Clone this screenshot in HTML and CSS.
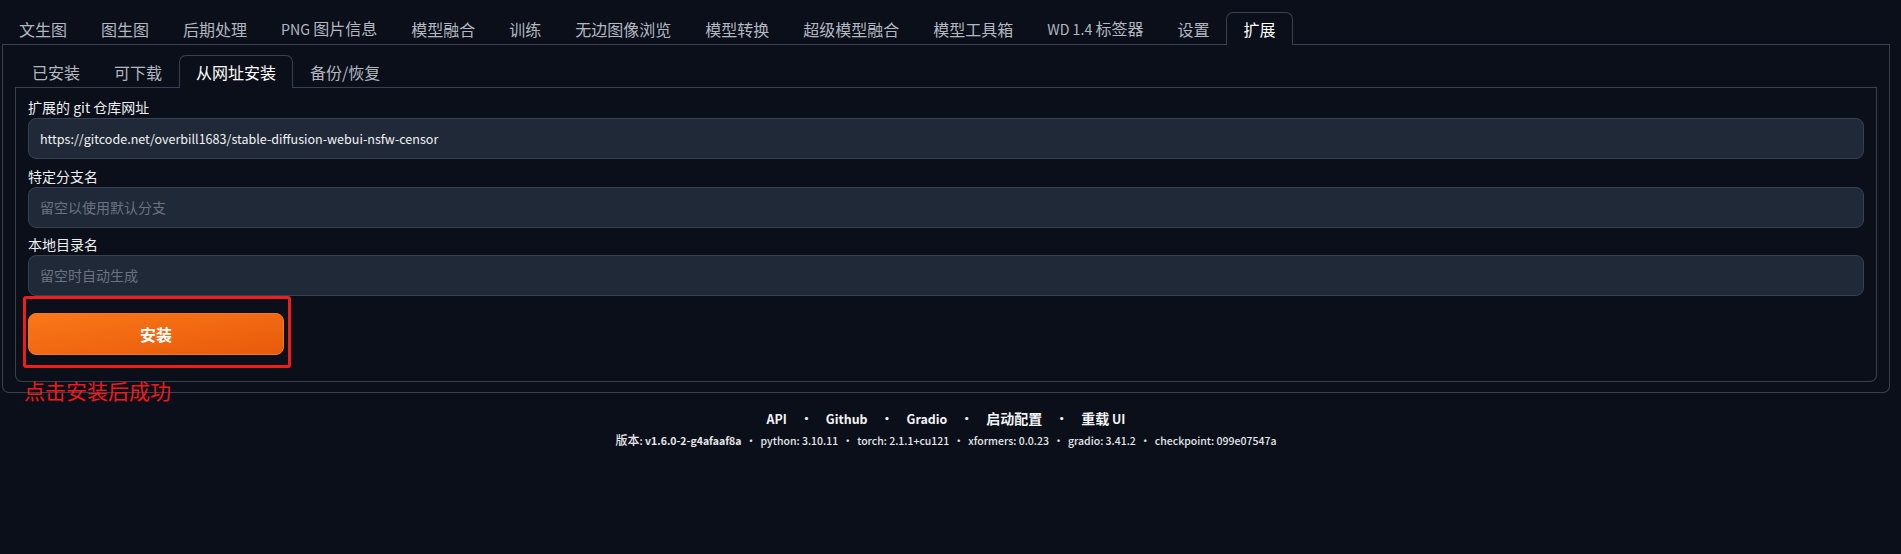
FILE: index.html
```html
<!DOCTYPE html>
<html lang="zh-CN">
<head>
<meta charset="utf-8">
<title>扩展</title>
<link rel="stylesheet" href="styles.css">
</head>
<body>
<div class="app">
  <nav class="tab-nav">
    <button class="tab">文生图</button>
    <button class="tab">图生图</button>
    <button class="tab">后期处理</button>
    <button class="tab"><span class="lat-tab">PNG </span>图片信息</button>
    <button class="tab">模型融合</button>
    <button class="tab">训练</button>
    <button class="tab">无边图像浏览</button>
    <button class="tab">模型转换</button>
    <button class="tab">超级模型融合</button>
    <button class="tab">模型工具箱</button>
    <button class="tab"><span class="lat-tab">WD 1.4 </span>标签器</button>
    <button class="tab">设置</button>
    <button class="tab selected">扩展</button>
  </nav>
  <section class="panel outer">
    <nav class="tab-nav">
      <button class="tab">已安装</button>
      <button class="tab">可下载</button>
      <button class="tab selected">从网址安装</button>
      <button class="tab">备份/恢复</button>
    </nav>
    <div class="panel inner">
      <div class="field">
        <label class="label">扩展的 git 仓库网址</label>
        <div class="input url">https://gitcode.net/overbill1683/stable-diffusion-webui-nsfw-censor</div>
      </div>
      <div class="field">
        <label class="label">特定分支名</label>
        <div class="input placeholder">留空以使用默认分支</div>
      </div>
      <div class="field">
        <label class="label">本地目录名</label>
        <div class="input placeholder">留空时自动生成</div>
      </div>
      <button class="primary">安装</button>
    </div>
  </section>
  <footer class="footer">
    <div class="links">
      <span class="lat">API</span><span class="dot">•</span><span class="lat">Github</span><span class="dot">•</span><span class="lat">Gradio</span><span class="dot">•</span><span>启动配置</span><span class="dot">•</span><span>重载<span class="lat"> UI</span></span>
    </div>
    <div class="versions">
      <span>版本<span class="lat">: <b>v1.6.0-2-g4afaaf8a</b></span></span><span class="dot">•</span><span class="lat">python: 3.10.11</span><span class="dot">•</span><span class="lat">torch: 2.1.1+cu121</span><span class="dot">•</span><span class="lat">xformers: 0.0.23</span><span class="dot">•</span><span class="lat">gradio: 3.41.2</span><span class="dot">•</span><span class="lat">checkpoint: 099e07547a</span>
    </div>
  </footer>
</div>
<div class="mark-box"></div>
<div class="mark-text">点击安装后成功</div>
</body>
</html>
```
FILE: styles.css
```css
html, body {
  margin: 0;
  padding: 0;
  background: #0b0f19;
}
body {
  position: relative;
  width: 1901px;
  height: 554px;
  overflow: hidden;
  font-family: "Noto Sans CJK SC", "Noto Sans", sans-serif;
  color: #e5e7eb;
}
.app {
  padding: 12px 11px 0 2px;
}
.tab-nav {
  display: flex;
  border-bottom: 1px solid #374151;
}
.tab {
  height: 32px;
  padding: 0 16px;
  margin: 0;
  border: 1px solid transparent;
  border-bottom: none;
  border-radius: 7px 7px 0 0;
  background: transparent;
  font-family: inherit;
  font-size: 16px;
  line-height: 30px;
  color: #b2b7c0;
  white-space: nowrap;
  cursor: pointer;
}
.tab.selected {
  border-color: #374151;
  background: #0b0f19;
  color: #ffffff;
  height: 33px;
  margin-bottom: -1px;
}
.lat-tab {
  font-size: 0.885em;
}
.panel {
  border: 1px solid #374151;
  border-top: none;
  border-radius: 0 0 7px 7px;
}
.outer {
  padding: 10px 12px 10px 12px;
}
.inner {
  padding: 9px 12px 26px 12px;
  display: flex;
  flex-direction: column;
  gap: 6.5px;
}
.field {
  display: flex;
  flex-direction: column;
}
.label {
  font-size: 14px;
  line-height: 20px;
  margin-bottom: 1px;
  color: #eceef1;
}
.input {
  height: 41px;
  box-sizing: border-box;
  border: 1px solid #374151;
  border-radius: 8px;
  background: #1f2937;
  padding: 0 11px;
  font-size: 14px;
  line-height: 39px;
  color: #e5e7eb;
}
.input.url {
  font-size: 12.55px;
  color: #f1f2f4;
}
.input.placeholder {
  color: #6b7280;
}
.primary {
  margin-top: 10.5px;
  width: 256px;
  height: 42px;
  border: 1px solid #f5782a;
  border-radius: 8px;
  background: linear-gradient(to bottom right, #fa7718, #e85a0b);
  color: #ffffff;
  font-family: inherit;
  font-size: 16px;
  font-weight: 700;
  cursor: pointer;
}
.footer {
  margin-top: 15px;
  display: flex;
  flex-direction: column;
  align-items: center;
  color: #f3f4f6;
}
.links {
  display: flex;
  align-items: baseline;
  font-size: 14px;
  line-height: 20px;
  font-weight: 700;
}
.links .lat {
  font-size: 12.4px;
}
.links .dot {
  width: 39px;
  text-align: center;
  font-size: 12.4px;
}
.versions {
  margin-top: 3px;
  display: flex;
  align-items: baseline;
  font-size: 12px;
  line-height: 16px;
  font-weight: 500;
  color: #e5e7eb;
}
.versions .lat {
  font-size: 10.5px;
}
.versions b {
  font-weight: 700;
}
.versions .dot {
  width: 19px;
  text-align: center;
  font-size: 10.5px;
}
.mark-box {
  position: absolute;
  left: 23px;
  top: 296px;
  width: 268px;
  height: 72px;
  box-sizing: border-box;
  border: 3px solid #ee1c1c;
  border-radius: 3px;
}
.mark-text {
  position: absolute;
  left: 24px;
  top: 379px;
  font-size: 21px;
  line-height: 22px;
  color: #f0181a;
}
```
